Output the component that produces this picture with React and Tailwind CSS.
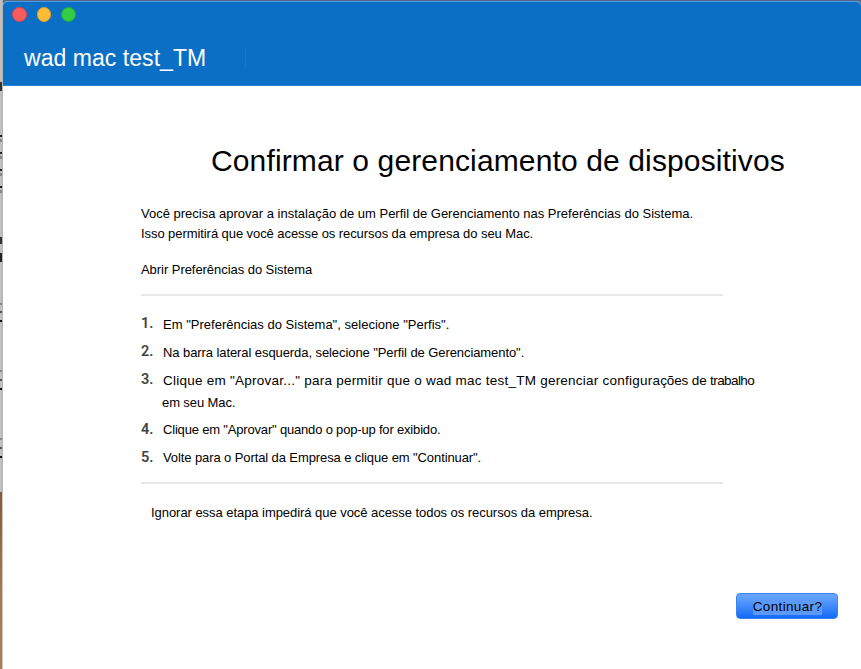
const steps = [
  { n: '1.', text: 'Em "Preferências do Sistema", selecione "Perfis".', gap: 'mt-0', lift: '-mt-px', track: 'tracking-[0.01px]' },
  { n: '2.', text: 'Na barra lateral esquerda, selecione "Perfil de Gerenciamento".', gap: 'mt-2', lift: '-mt-px', track: 'tracking-[-0.08px]' },
  {
    n: '3.',
    text: (
      <>
        Clique em "Aprovar..." para permitir que o wad mac test_TM gerenciar configura
        <span className="tracking-[-0.15px]">ções de </span>
        <span className="tracking-[-0.6px]">trabalho</span>
      </>
    ),
    more: 'em seu Mac.',
    gap: 'mt-2',
    lift: '-mt-px',
    track: 'text-[13.5px] leading-5 tracking-[0.24px]',
  },
  { n: '4.', text: 'Clique em "Aprovar" quando o pop-up for exibido.', gap: 'mt-[7px]', lift: 'mt-0', track: 'tracking-[-0.18px]' },
  { n: '5.', text: 'Volte para o Portal da Empresa e clique em "Continuar".', gap: 'mt-2', lift: 'mt-0', track: 'tracking-[-0.1px]' },
];

// Slivers of the text in the window behind this one: margin above, height, colour
const slivers = [
  'mt-[82px] h-[9px] bg-[#333]',
  'mt-[44px] h-[2px] bg-[#222]',
  'mt-[2px] h-[3px] bg-[#888]',
  'mt-[10px] h-[2px] bg-[#222]',
  'mt-[2px] h-[3px] bg-[#888]',
  'mt-[10px] h-[2px] bg-[#222]',
  'mt-[2px] h-[3px] bg-[#888]',
  'mt-[10px] h-[2px] bg-[#222]',
  'mt-[2px] h-[3px] bg-[#888]',
  'mt-[44px] h-[7px] bg-[#333]',
  'mt-[9px] h-[9px] bg-[#222]',
  'mt-[41px] h-[2px] bg-[#888]',
  'mt-[6px] h-[2px] bg-[#555]',
  'mt-[7px] h-[2px] bg-[#111]',
  'mt-[48px] h-[2px] bg-[#888]',
  'mt-[7px] h-[2px] bg-[#555]',
  'mt-[7px] h-[2px] bg-[#111]',
  'mt-[48px] h-[2px] bg-[#888]',
  'mt-[7px] h-[2px] bg-[#555]',
  'mt-[7px] h-[2px] bg-[#111]',
];

function Header() {
  return (
    <header className="h-[85px] shrink-0 rounded-t-[5px] border-t border-b border-t-[#4b9be0] border-b-[#2b80cf] bg-[#0b6fc6]">
      <div className="flex gap-[10px] pt-[5px] pl-[9px]">
        <span className="size-[14.5px] rounded-full border border-[#e2434b] bg-[#fc5b5e]" />
        <span className="size-[14.5px] rounded-full border border-[#dda12f] bg-[#fdbd32]" />
        <span className="size-[14.5px] rounded-full border border-[#22a83b] bg-[#34cb45]" />
      </div>
      <div className="mt-[21px] flex items-center">
        <h2 className="w-[221px] pl-[21px] text-[23px] leading-[30px] tracking-[0.05px] whitespace-nowrap text-white">wad mac test_TM</h2>
        <span className="ml-[21px] h-5 w-px bg-[#1976ca]" />
      </div>
    </header>
  );
}

export default function App() {
  return (
    <div className="flex h-[669px] w-[861px] overflow-hidden bg-[#5b6480] font-['Liberation_Sans',Arial,sans-serif] text-[13px] leading-5 text-black">
      <div className="flex h-full w-[3px] shrink-0 flex-col">
        <div className="h-[446px] w-[3px] grow border-r border-[#b4b4b6] bg-[#c0c0c0]">
          {slivers.map((look, i) => (
            <div key={i} className={`w-[2px] ${look}`} />
          ))}
        </div>
        <div className="h-[177px] border-r border-[#cfc8c2] bg-linear-to-b from-[#86593a] via-[#a07a48] to-[#a8824e]" />
      </div>

      <div className="mt-px flex w-[858px] flex-col rounded-t-[5px] bg-white">
        <Header />
        <main className="flex grow flex-col">
          <h1 className="mt-[55px] ml-[208px] text-[30px] leading-[40px] tracking-[0.13px] whitespace-nowrap">
            Confirmar o gerenciamento de dispositivos
          </h1>
          <div className="mt-[23px] ml-[138px] w-[582px] whitespace-nowrap">
            <p>Você precisa aprovar a instalação de um Perfil de Gerenciamento nas Preferências do Sistema.</p>
            <p className="tracking-[-0.07px]">Isso permitirá que você acesse os recursos da empresa do seu Mac.</p>
            <p className="mt-4 tracking-[-0.05px]">Abrir Preferências do Sistema</p>
            <hr className="mt-[14px] border-t-2 border-[#e8e8e8]" />
            <ol className="mt-[19px]">
              {steps.map((s) => (
                <li key={s.n} className={`flex ${s.gap}`}>
                  <span className={`w-[22px] shrink-0 font-[Roboto,sans-serif] text-[14.5px] font-semibold text-[#444] ${s.lift}`}>{s.n}</span>
                  <div>
                    <p className={s.track}>{s.text}</p>
                    {s.more && <p className="mt-[2px] -ml-px tracking-[-0.1px]">{s.more}</p>}
                  </div>
                </li>
              ))}
            </ol>
            <hr className="mt-[14px] border-t-2 border-[#e8e8e8]" />
            <p className="mt-[19px] ml-[10px] tracking-[-0.05px]">Ignorar essa etapa impedirá que você acesse todos os recursos da empresa.</p>
          </div>
          <div className="mt-[70px] mr-[23px] flex justify-end">
            <button className="flex h-[26px] w-[102px] items-end justify-center rounded-[4px] border border-[#3b82f0] bg-linear-to-b from-[#6aa8fb] to-[#0f6af8] pb-[3px] pl-px">
              <span className="bg-[#5b9afa] text-[13.5px] leading-4 tracking-[0.35px]">Continuar?</span>
            </button>
          </div>
        </main>
      </div>
    </div>
  );
}
